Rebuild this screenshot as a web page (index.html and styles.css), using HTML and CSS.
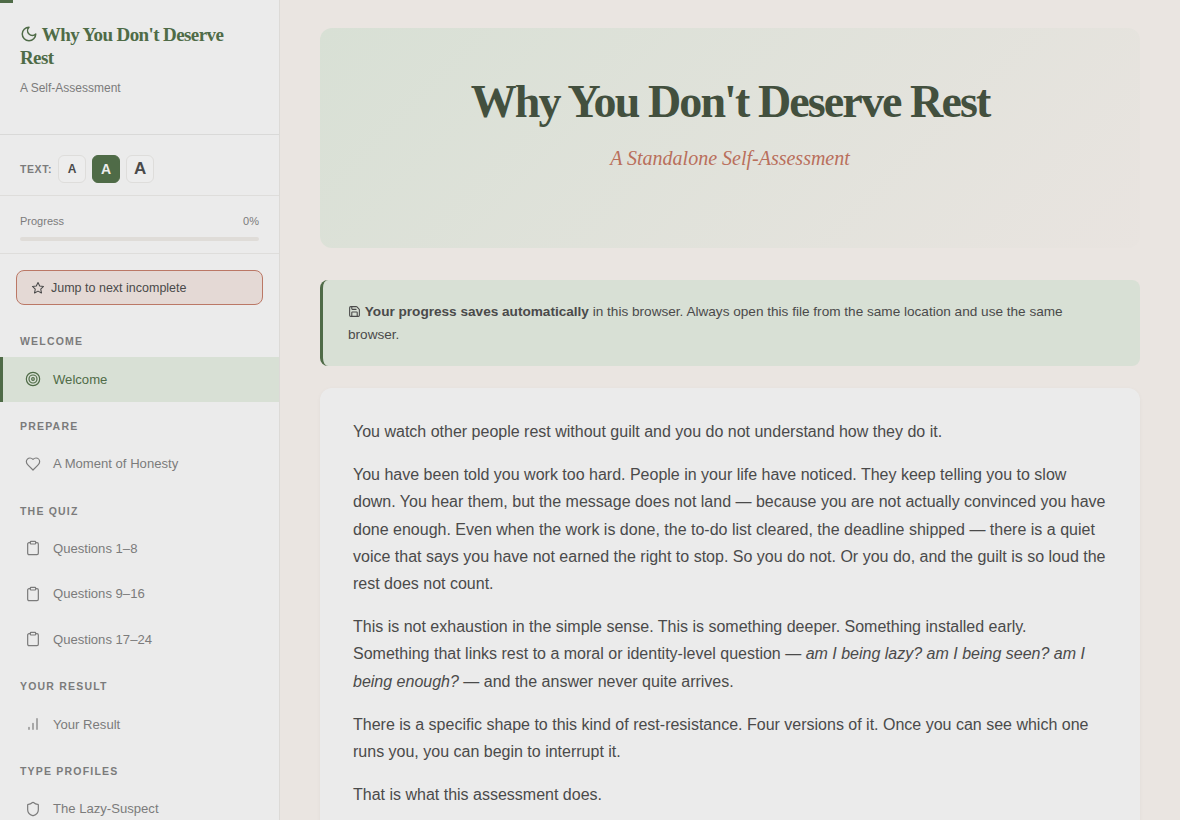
FILE: index.html
```html
<!DOCTYPE html>
<html lang="en">
<head>
    <meta charset="UTF-8">
    <meta name="viewport" content="width=device-width, initial-scale=1.0">
    <title>Why You Don't Deserve Rest</title>
    <link rel="stylesheet" href="styles.css">
</head>
<body>
    <svg class="icon-defs" aria-hidden="true">
        <symbol id="i-clipboard" viewBox="0 0 24 24"><rect x="8" y="2" width="8" height="4" rx="1"/><path d="M16 4h2a2 2 0 0 1 2 2v14a2 2 0 0 1-2 2H6a2 2 0 0 1-2-2V6a2 2 0 0 1 2-2h2"/></symbol>
    </svg>
    <div class="read-bar"></div>
    <div class="layout">
        <aside class="sidebar">
            <div class="side-head">
                <h2 class="side-title">
                    <svg class="icon icon-moon" viewBox="0 0 24 24"><path d="M12 3a6 6 0 0 0 9 9 9 9 0 1 1-9-9Z"/></svg>
                    Why You Don't Deserve Rest
                </h2>
                <p class="side-sub">A Self-Assessment</p>
            </div>
            <div class="text-size">
                <span class="text-label">Text:</span>
                <button class="size-btn size-s">A</button>
                <button class="size-btn size-m active">A</button>
                <button class="size-btn size-l">A</button>
            </div>
            <div class="progress">
                <div class="progress-row"><span>Progress</span><span>0%</span></div>
                <div class="progress-track"></div>
            </div>
            <div class="jump-wrap">
                <button class="jump-btn">
                    <svg class="icon icon-star" viewBox="0 0 24 24"><path d="M12 2.5l2.9 6 6.6.9-4.8 4.6 1.2 6.5-5.9-3.1-5.9 3.1 1.2-6.5L2.5 9.4l6.6-.9z"/></svg>
                    Jump to next incomplete
                </button>
            </div>
            <nav>
                <div class="nav-label first">Welcome</div>
                <a class="nav-item active">
                    <svg class="icon" viewBox="0 0 24 24"><circle cx="12" cy="12" r="10"/><circle cx="12" cy="12" r="6"/><circle cx="12" cy="12" r="2"/></svg>
                    Welcome
                </a>
                <div class="nav-label">Prepare</div>
                <a class="nav-item">
                    <svg class="icon" viewBox="0 0 24 24"><path d="M19 14c1.5-1.5 3-3.2 3-5.500A5.500 5.500 0 0 0 16.500 3c-1.800 0-3 .5-4.500 2-1.500-1.500-2.700-2-4.500-2A5.500 5.500 0 0 0 2 8.500c0 2.300 1.500 4 3 5.500l7 7Z"/></svg>
                    A Moment of Honesty
                </a>
                <div class="nav-label">The Quiz</div>
                <a class="nav-item"><svg class="icon"><use href="#i-clipboard"/></svg>Questions 1–8</a>
                <a class="nav-item"><svg class="icon"><use href="#i-clipboard"/></svg>Questions 9–16</a>
                <a class="nav-item"><svg class="icon"><use href="#i-clipboard"/></svg>Questions 17–24</a>
                <div class="nav-label">Your Result</div>
                <a class="nav-item">
                    <svg class="icon" viewBox="0 0 24 24"><path d="M18 20V4M12 20v-9M6 20v-3"/></svg>
                    Your Result
                </a>
                <div class="nav-label">Type Profiles</div>
                <a class="nav-item">
                    <svg class="icon" viewBox="0 0 24 24"><path d="M20 13c0 5-3.500 7.500-7.660 8.950a1 1 0 0 1-.67-.01C7.500 20.500 4 18 4 13V6a1 1 0 0 1 1-1c2 0 4.500-1.200 6.240-2.720a1.170 1.170 0 0 1 1.520 0C14.510 3.810 17 5 19 5a1 1 0 0 1 1 1Z"/></svg>
                    The Lazy-Suspect
                </a>
            </nav>
        </aside>
        <main class="main">
            <header class="hero">
                <h1>Why You Don't Deserve Rest</h1>
                <p>A Standalone Self-Assessment</p>
            </header>
            <div class="notice">
                <svg class="icon icon-save" viewBox="0 0 24 24"><path d="M15.200 3a2 2 0 0 1 1.400.6l3.800 3.800a2 2 0 0 1 .6 1.400V19a2 2 0 0 1-2 2H5a2 2 0 0 1-2-2V5a2 2 0 0 1 2-2z"/><path d="M17 21v-7a1 1 0 0 0-1-1H8a1 1 0 0 0-1 1v7"/><path d="M7 3v4a1 1 0 0 0 1 1h7"/></svg>
                <strong>Your progress saves automatically</strong> in this browser. Always open this file from the same location and use the same browser.
            </div>
            <section class="card">
                <p>You watch other people rest without guilt and you do not understand how they do it.</p>
                <p>You have been told you work too hard. People in your life have noticed. They keep telling you to slow down. You hear them, but the message does not land — because you are not actually convinced you have done enough. Even when the work is done, the to-do list cleared, the deadline shipped — there is a quiet voice that says you have not earned the right to stop. So you do not. Or you do, and the guilt is so loud the rest does not count.</p>
                <p>This is not exhaustion in the simple sense. This is something deeper. Something installed early. Something that links rest to a moral or identity-level question — <em>am I being lazy? am I being seen? am I being enough?</em> — and the answer never quite arrives.</p>
                <p>There is a specific shape to this kind of rest-resistance. Four versions of it. Once you can see which one runs you, you can begin to interrupt it.</p>
                <p>That is what this assessment does.</p>
            </section>
        </main>
    </div>
</body>
</html>
```

FILE: styles.css
```css
* {
    box-sizing: border-box;
}
html, body {
    height: 100%;
}
body {
    margin: 0;
    overflow: hidden;
    font-family: "Liberation Sans", Arial, sans-serif;
    background-color: #eae5e1;
    color: #4a4a4a;
}
.icon-defs {
    display: none;
}
.icon {
    width: 16px;
    height: 16px;
    fill: none;
    stroke: currentColor;
    stroke-width: 2;
    stroke-linecap: round;
    stroke-linejoin: round;
    flex-shrink: 0;
}
.read-bar {
    position: fixed;
    top: 0;
    left: 0;
    width: 13px;
    height: 3px;
    background-color: #4f6b47;
}
.layout {
    display: flex;
    height: 100vh;
}

/* sidebar */
.sidebar {
    width: 280px;
    flex-shrink: 0;
    height: 100%;
    overflow: hidden;
    background-color: #ebebeb;
    border-right: 1px solid #dcdad7;
}
.side-head {
    height: 135px;
    padding: 23px 20px 0;
    border-bottom: 1px solid #d9d9d8;
}
.side-title {
    margin: 0;
    font-family: "Liberation Serif", Georgia, serif;
    font-size: 19px;
    line-height: 23px;
    font-weight: 700;
    letter-spacing: -0.6px;
    color: #4f6b47;
}
.icon-moon {
    width: 18px;
    height: 18px;
    vertical-align: -2px;
}
.side-sub {
    margin: 11px 0 0;
    font-size: 12px;
    line-height: 16px;
    color: #7b7b7b;
}
.text-size {
    display: flex;
    align-items: center;
    gap: 6px;
    height: 61px;
    padding: 8px 20px 0;
    border-bottom: 1px solid #dedddb;
}
.text-label {
    font-size: 10.500px;
    font-weight: 700;
    letter-spacing: 0.6px;
    text-transform: uppercase;
    color: #7b7b7b;
}
.size-btn {
    width: 28px;
    height: 28px;
    padding: 0;
    border: 1px solid #dedddb;
    border-radius: 6px;
    background-color: #ededed;
    font-family: inherit;
    font-weight: 700;
    color: #4a4a4a;
}
.size-s {
    font-size: 12px;
}
.size-m {
    font-size: 14px;
}
.size-l {
    font-size: 17px;
}
.size-btn.active {
    background-color: #4f6b47;
    border-color: #4f6b47;
    color: #ededed;
}
.progress {
    height: 58px;
    padding: 19px 20px 0;
    border-bottom: 1px solid #dedddb;
}
.progress-row {
    display: flex;
    justify-content: space-between;
    font-size: 11px;
    line-height: 13px;
    color: #7b7b7b;
    margin-bottom: 9px;
}
.progress-track {
    height: 4px;
    border-radius: 2px;
    background-color: #dfdcd8;
}
.jump-wrap {
    padding: 16px 16px 0;
}
.jump-btn {
    display: flex;
    align-items: center;
    gap: 6px;
    width: 100%;
    height: 35px;
    padding: 0 14px;
    border: 1px solid #bb7866;
    border-radius: 8px;
    background-color: #e4d9d5;
    font-family: inherit;
    font-size: 12.500px;
    color: #4a4a4a;
}
.icon-star {
    width: 14px;
    height: 14px;
    stroke-width: 1.800;
}
.nav-label {
    padding: 18.400px 20px 8px;
    font-size: 10.500px;
    line-height: 13px;
    font-weight: 700;
    letter-spacing: 1.200px;
    text-transform: uppercase;
    color: #7b7b7b;
}
.nav-label.first {
    padding: 30px 20px 8.500px;
}
.nav-item {
    display: flex;
    align-items: center;
    gap: 12px;
    height: 45.450px;
    padding: 0 25px;
    font-size: 13.100px;
    color: #7b7b7b;
}
.nav-item .icon {
    width: 16px;
    height: 16px;
    stroke-width: 1.800;
}
.nav-item.active {
    height: 45px;
    background-color: #d8e0d5;
    border-left: 3px solid #4f6b47;
    padding-left: 22px;
    color: #4f6b47;
}

/* main */
.main {
    flex: 1;
    min-width: 0;
    height: 100%;
    overflow: hidden;
    padding: 28px 40px;
}
.hero {
    height: 220px;
    margin-bottom: 32px;
    padding-top: 44px;
    border-radius: 12px;
    text-align: center;
    background: linear-gradient(135deg, #d8e0d5 0%, #e9e4e0 100%);
}
.hero h1 {
    margin: 0 0 15px;
    font-family: "Liberation Serif", Georgia, serif;
    font-size: 46px;
    line-height: 60px;
    font-weight: 700;
    letter-spacing: -1.900px;
    color: #43503e;
}
.hero p {
    margin: 0;
    font-family: "Liberation Serif", Georgia, serif;
    font-size: 20px;
    font-style: italic;
    color: #b96f5b;
}
.notice {
    height: 86px;
    margin-bottom: 22px;
    padding: 20px 24px 20px 25px;
    border-left: 3px solid #4f6b47;
    border-radius: 8px;
    background-color: #d8e0d5;
    font-size: 13.600px;
    line-height: 23px;
}
.icon-save {
    width: 13px;
    height: 13px;
    vertical-align: -2px;
}
.card {
    padding: 29.900px 33px;
    border-radius: 12px;
    background-color: #ebebeb;
    box-shadow: 0 1px 4px rgba(0,0,0,0.04);
    font-size: 16px;
    line-height: 27.200px;
}
.card p {
    margin: 0 0 16px;
}
```
